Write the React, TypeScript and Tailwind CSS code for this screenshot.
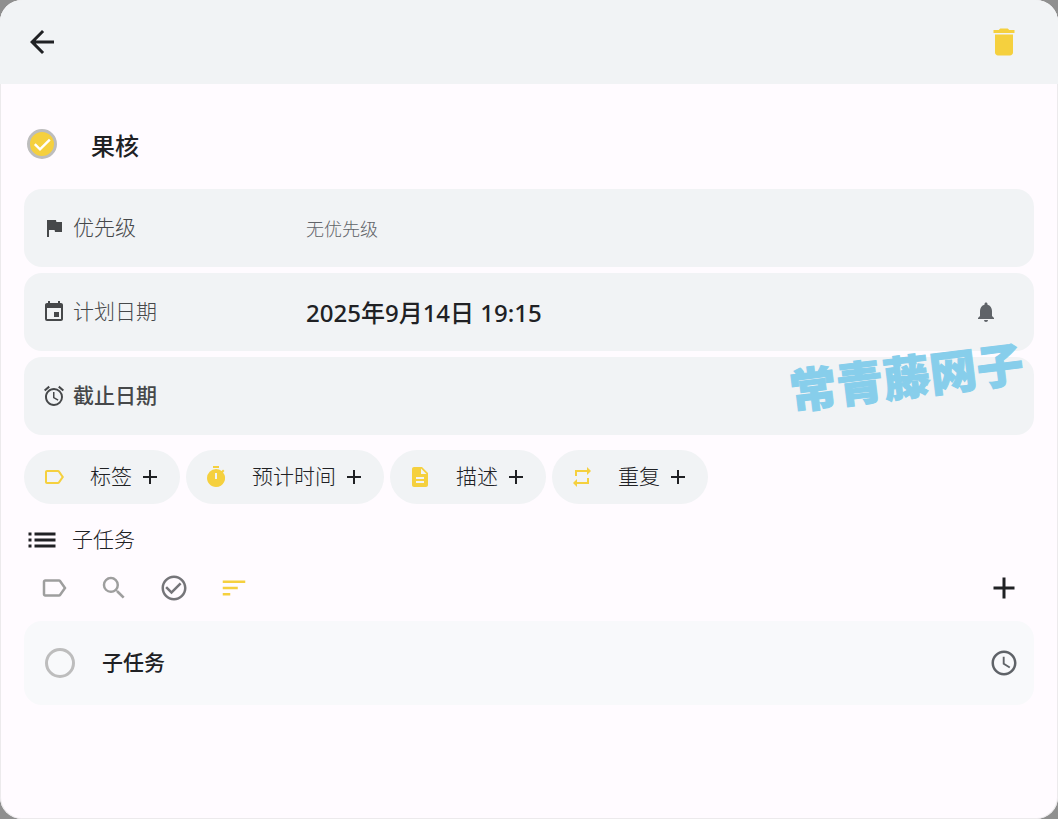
import type { ReactNode } from "react";
import { useState } from "react";
import {
  MdAccessTime,
  MdAdd,
  MdAlarm,
  MdArrowBack,
  MdCheckCircleOutline,
  MdDelete,
  MdDescription,
  MdEvent,
  MdFlag,
  MdLabelOutline,
  MdList,
  MdNotifications,
  MdRepeat,
  MdSearch,
  MdSort,
  MdTimer,
} from "react-icons/md";

function TaskCheckbox({ label, initial = false }: { label: string; initial?: boolean }) {
  const [checked, setChecked] = useState(initial);
  return (
    <span className="grid size-[30px] shrink-0 place-items-center">
      <input
        type="checkbox"
        aria-label={label}
        checked={checked}
        onChange={(e) => setChecked(e.target.checked)}
        className="col-start-1 row-start-1 size-[30px] cursor-pointer appearance-none rounded-full border-3 border-[#bdbdbd] checked:bg-[#f5d03e]"
      />
      {checked && (
        <svg
          viewBox="0 0 30 30"
          className="pointer-events-none col-start-1 row-start-1 size-[30px]"
          fill="none"
          stroke="white"
          strokeWidth="2.4"
        >
          <path d="M7.8 15.2l5.2 5.2L22.8 10.6" />
        </svg>
      )}
    </span>
  );
}

function DetailRow({
  icon,
  name,
  strong = false,
  value,
  action,
}: {
  icon: ReactNode;
  name: string;
  strong?: boolean;
  value?: ReactNode;
  action?: ReactNode;
}) {
  return (
    <div className="flex h-[78px] items-center rounded-[18px] bg-[#f1f3f5] pr-9 pl-[18px]">
      <button type="button" className="flex flex-1 items-center self-stretch text-left">
        <span className="flex w-[264px] shrink-0 items-center gap-[7px] text-[#46484a]">
          {icon}
          <span className={strong ? "text-[21px] font-medium" : "text-[21px] font-light"}>{name}</span>
        </span>
        {value}
      </button>
      {action}
    </div>
  );
}

function Chip({ icon, name }: { icon: ReactNode; name: string }) {
  return (
    <button type="button" className="flex h-[54px] items-center rounded-full bg-[#f1f3f5] px-[18px]">
      <span className="mr-6 text-[#f5d03e]">{icon}</span>
      <span className="mr-[6px] text-[21px] font-light">{name}</span>
      <MdAdd size={24} />
    </button>
  );
}

export default function App() {
  return (
    <div className="flex min-h-screen flex-col bg-[#8f8f8f] font-['Noto_Sans','Noto_Sans_CJK_SC',sans-serif] text-[#202124]">
      <main className="relative flex flex-1 flex-col overflow-hidden rounded-[22px] bg-[#fffbff] shadow-[inset_0_0_0_1px_#eceaec]">
        <header className="flex h-[84px] items-center justify-between bg-[#f1f3f5] pr-9 pl-6">
          <button type="button" aria-label="返回">
            <MdArrowBack size={36} />
          </button>
          <button type="button" aria-label="删除" className="text-[#f5d03e]">
            <MdDelete size={36} />
          </button>
        </header>

        <div className="px-6">
          <div className="flex h-[105px] items-center gap-[34px] pt-[15px] pl-[3px]">
            <TaskCheckbox label="果核" initial />
            <h1 className="pt-1 text-2xl font-medium">果核</h1>
          </div>

          <div className="relative flex flex-col gap-[6px]">
            <DetailRow
              icon={<MdFlag size={24} />}
              name="优先级"
              value={<span className="pt-[2px] text-lg font-light text-[#5f6368]">无优先级</span>}
            />
            <DetailRow
              icon={<MdEvent size={24} />}
              name="计划日期"
              value={<span className="pt-[2px] text-2xl font-medium">2025年9月14日 19:15</span>}
              action={
                <button type="button" aria-label="提醒" className="text-[#5f6368]">
                  <MdNotifications size={24} />
                </button>
              }
            />
            <DetailRow icon={<MdAlarm size={24} />} name="截止日期" strong />
            <span className="pointer-events-none absolute top-[152px] right-[10px] -rotate-7 text-[47px] leading-[72px] font-black whitespace-nowrap text-[#87ceeb] [-webkit-text-stroke:1px_#87ceeb]">
              常青藤网子
            </span>
          </div>

          <div className="mt-[15px] flex flex-wrap gap-[6px]">
            <Chip icon={<MdLabelOutline size={24} />} name="标签" />
            <Chip icon={<MdTimer size={24} />} name="预计时间" />
            <Chip icon={<MdDescription size={24} />} name="描述" />
            <Chip icon={<MdRepeat size={24} />} name="重复" />
          </div>

          <h2 className="mt-[18px] flex h-9 items-center gap-3 text-[21px] font-light">
            <MdList size={36} />
            子任务
          </h2>

          <div className="mt-3 flex h-9 items-center justify-between pr-3 pl-[15px]">
            <div className="flex items-center gap-[30px] text-[#9e9e9e]">
              <button type="button" aria-label="标签筛选">
                <MdLabelOutline size={30} />
              </button>
              <button type="button" aria-label="搜索">
                <MdSearch size={30} />
              </button>
              <button type="button" aria-label="已完成" className="text-[#757579]">
                <MdCheckCircleOutline size={30} />
              </button>
              <button type="button" aria-label="排序" className="text-[#f5d03e]">
                <MdSort size={30} />
              </button>
            </div>
            <button type="button" aria-label="添加子任务">
              <MdAdd size={36} />
            </button>
          </div>

          <ul className="mt-[15px]">
            <li className="flex h-[84px] items-center gap-[27px] rounded-[18px] bg-[#f8f9fb] pr-[15px] pl-[21px]">
              <TaskCheckbox label="子任务" />
              <span className="flex-1 text-[21px] font-medium">子任务</span>
              <button type="button" aria-label="时间" className="text-[#5f6368]">
                <MdAccessTime size={30} />
              </button>
            </li>
          </ul>
        </div>
      </main>
    </div>
  );
}
